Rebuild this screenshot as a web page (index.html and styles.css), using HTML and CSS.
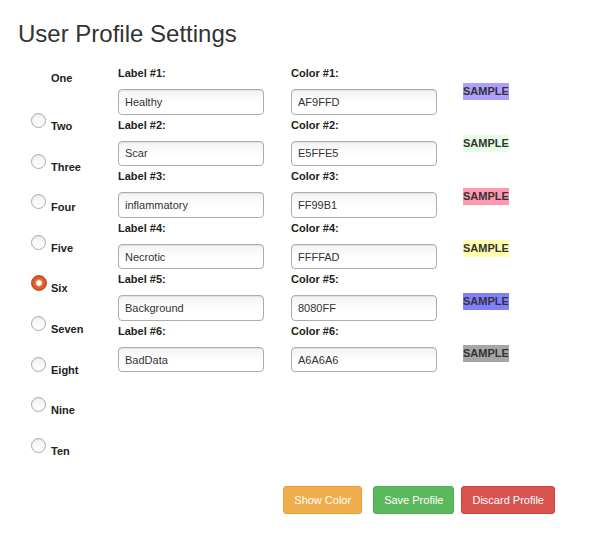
FILE: index.html
```html
<!DOCTYPE html>
<html>
<head>
<meta charset="utf-8">
<title>User Profile Settings</title>
<link rel="stylesheet" href="styles.css">
</head>
<body>
<div class="page">
  <h2 class="title">User Profile Settings</h2>
  <div class="form">
    <div class="radios">
      <div class="radio-row first"><span class="radio hidden"></span><span class="radio-label">One</span></div>
      <div class="radio-row"><span class="radio"></span><span class="radio-label">Two</span></div>
      <div class="radio-row"><span class="radio"></span><span class="radio-label">Three</span></div>
      <div class="radio-row"><span class="radio"></span><span class="radio-label">Four</span></div>
      <div class="radio-row"><span class="radio"></span><span class="radio-label">Five</span></div>
      <div class="radio-row"><span class="radio checked"></span><span class="radio-label">Six</span></div>
      <div class="radio-row"><span class="radio"></span><span class="radio-label">Seven</span></div>
      <div class="radio-row"><span class="radio"></span><span class="radio-label">Eight</span></div>
      <div class="radio-row"><span class="radio"></span><span class="radio-label">Nine</span></div>
      <div class="radio-row"><span class="radio"></span><span class="radio-label">Ten</span></div>
    </div>
    <div class="fields">
      <div class="field"><label class="field-label">Label #1:</label><input class="input" value="Healthy"></div>
      <div class="field"><label class="field-label">Color #1:</label><input class="input" value="AF9FFD"></div>

      <div class="field"><label class="field-label">Label #2:</label><input class="input" value="Scar"></div>
      <div class="field"><label class="field-label">Color #2:</label><input class="input" value="E5FFE5"></div>

      <div class="field"><label class="field-label">Label #3:</label><input class="input" value="inflammatory"></div>
      <div class="field"><label class="field-label">Color #3:</label><input class="input" value="FF99B1"></div>

      <div class="field"><label class="field-label">Label #4:</label><input class="input" value="Necrotic"></div>
      <div class="field"><label class="field-label">Color #4:</label><input class="input" value="FFFFAD"></div>

      <div class="field"><label class="field-label">Label #5:</label><input class="input" value="Background"></div>
      <div class="field"><label class="field-label">Color #5:</label><input class="input" value="8080FF"></div>

      <div class="field"><label class="field-label">Label #6:</label><input class="input" value="BadData"></div>
      <div class="field"><label class="field-label">Color #6:</label><input class="input" value="A6A6A6"></div>
    </div>
    <div class="samples">
      <div class="sample-cell"><span class="sample" style="background:#AF9FFD">SAMPLE</span></div>
      <div class="sample-cell"><span class="sample" style="background:#E5FFE5">SAMPLE</span></div>
      <div class="sample-cell"><span class="sample" style="background:#FF99B1">SAMPLE</span></div>
      <div class="sample-cell"><span class="sample" style="background:#FFFFAD">SAMPLE</span></div>
      <div class="sample-cell"><span class="sample" style="background:#8080FF">SAMPLE</span></div>
      <div class="sample-cell"><span class="sample" style="background:#A6A6A6">SAMPLE</span></div>
    </div>
  </div>
  <div class="buttons">
    <button class="btn btn-warning">Show Color</button>
    <button class="btn btn-success">Save Profile</button>
    <button class="btn btn-danger">Discard Profile</button>
  </div>
</div>
</body>
</html>
```

FILE: styles.css
```css
* { box-sizing: border-box; }
html, body { margin: 0; padding: 0; background: #fff; }
body {
  font-family: "Liberation Sans", Arial, Helvetica, sans-serif;
  color: #333;
  font-size: 11px;
}
.page {
  width: 603px;
  padding: 21px 0 0 17px;
}
.title {
  margin: 0 0 0 1px;
  font-size: 24px;
  line-height: 26.4px;
  font-weight: 400;
  color: #333;
}
.form {
  display: flex;
  margin-top: 17.6px;
}
.radios {
  width: 101px;
  padding-left: 14px;
  display: flex;
  flex-direction: column;
}
.radio-row {
  display: flex;
  align-items: flex-start;
  height: 40.6px;
}
.radio-row.first { height: 48px; }
.radio {
  width: 15px;
  height: 15px;
  border-radius: 50%;
  border: 1px solid #a9a9a9;
  background: linear-gradient(#f2f2f2, #ffffff);
  box-shadow: inset 0 1px 1px rgba(0,0,0,0.06);
  flex: none;
}
.radio.hidden { visibility: hidden; }
.radio.checked {
  width: 16px;
  height: 16px;
  margin-left: -0.5px;
  margin-right: -0.5px;
  border-color: #c04b18;
  background: radial-gradient(circle at 50% 50%, #ffffff 0, #ffffff 2.3px, #f0a080 3px, #e2662f 4px, #dd5d27 5.5px, #c9501c 8px);
}
.radio-label {
  margin-top: 6px;
  margin-left: 5px;
  line-height: 15px;
  font-weight: 700;
  font-size: 11px;
  color: #222;
}
.fields {
  display: grid;
  grid-template-columns: 146px 146px;
  column-gap: 27px;
  align-content: start;
}
.field {
  display: flex;
  flex-direction: column;
  height: 51.6px;
}
.field-label {
  display: block;
  height: 16px;
  line-height: 16px;
  margin-bottom: 8px;
  font-weight: 700;
  font-size: 11px;
  color: #222;
}
.input {
  width: 146px;
  height: 25.5px;
  border: 1px solid #adadad;
  border-radius: 4px;
  padding: 0 6px;
  font-family: "Liberation Sans", Arial, Helvetica, sans-serif;
  font-size: 11px;
  color: #333;
  background: linear-gradient(#f3f3f3, #ffffff 60%);
  box-shadow: inset 0 1px 1px rgba(0,0,0,0.075);
  outline: none;
}
.samples {
  margin-left: 26px;
  padding-top: 17.5px;
  display: flex;
  flex-direction: column;
}
.sample-cell {
  height: 52.6px;
}
.sample {
  display: inline-block;
  line-height: 17px;
  height: 17px;
  font-weight: 700;
  font-size: 11px;
  color: #333;
}
.buttons {
  display: flex;
  justify-content: flex-end;
  padding-right: 48px;
  margin-top: 8px;
}
.btn {
  font-family: "Liberation Sans", Arial, Helvetica, sans-serif;
  font-size: 11px;
  line-height: 16px;
  padding: 5px 10px;
  height: 28px;
  border: 1px solid transparent;
  border-radius: 3px;
  color: #fff;
  cursor: pointer;
}
.btn-warning { background: #f0ad4e; border-color: #eea236; margin-right: 11px; }
.btn-success { background: #5cb85c; border-color: #4cae4c; margin-right: 7px; }
.btn-danger { background: #d9534f; border-color: #d43f3a; }
```
